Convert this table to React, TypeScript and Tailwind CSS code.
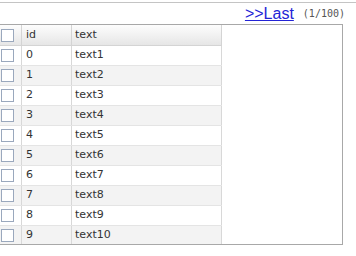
import React from "react";

const rows = Array.from({ length: 10 }, (_, i) => ({ id: i, text: `text${i + 1}` }));

function Box() {
  return <div className="w-[13px] h-[13px] border border-[#9aa8bd] bg-white" />;
}

export default function App() {
  return (
    <div className="w-[356px] h-[256px] bg-white" style={{ fontFamily: '"DejaVu Sans", Verdana, sans-serif' }}>
      <div className="h-[2px]" />
      <div className="border-t border-[#c4c4c4]" />
      <div className="flex justify-end items-center h-[21px] pr-[11px] gap-[9px]">
        <a className="text-[16px] leading-none text-[#2323d6] underline" style={{ fontFamily: '"Liberation Sans", Arial, sans-serif' }}>
          &gt;&gt;Last
        </a>
        <span className="text-[10px] text-[#555]" style={{ fontFamily: '"DejaVu Sans Mono", monospace' }}>(1/100)</span>
      </div>
      <div className="w-[343px] h-[221px] border border-[#a8a8a8] border-l-0 flex overflow-hidden">
        <div className="w-[222px] text-[11px] text-[#333]">
          <div className="flex h-[21px] bg-gradient-to-b from-[#fdfdfd] to-[#e6e6e6] border-b border-[#d4d4d4]">
            <div className="w-[22px] flex items-center pl-[1px] border-r border-[#d4d4d4]"><Box /></div>
            <div className="w-[50px] flex items-center pl-[4px] border-r border-[#d4d4d4]">id</div>
            <div className="w-[150px] flex items-center pl-[3px] border-r border-[#d4d4d4]">text</div>
          </div>
          {rows.map((r) => (
            <div key={r.id} className={`flex h-[20px] shrink-0 border-b border-[#e4e4e4] ${r.id % 2 === 1 ? "bg-[#f3f3f3]" : "bg-white"}`}>
              <div className="w-[22px] flex items-center pl-[1px] border-r border-[#d8d8d8]"><Box /></div>
              <div className="w-[50px] flex items-center pl-[4px] border-r border-[#d8d8d8]">{r.id}</div>
              <div className="w-[150px] flex items-center pl-[3px] border-r border-[#d8d8d8]">{r.text}</div>
            </div>
          ))}
        </div>
      </div>
    </div>
  );
}
